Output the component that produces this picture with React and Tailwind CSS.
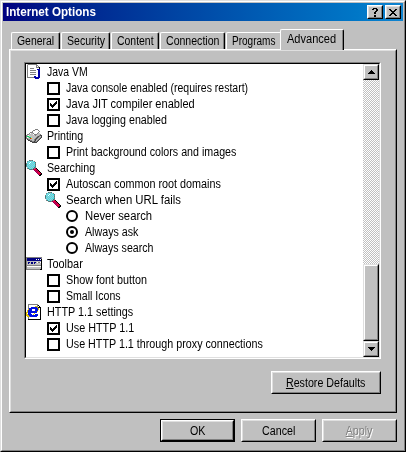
import React from "react";

const COLORS = {
  k: "#000000", w: "#ffffff", g: "#808080", l: "#c0c0c0", b: "#0000a8", c: "#40e0e8",
  t: "#408080", r: "#e00040", m: "#900060", n: "#000080", y: "#e0c000", e: "#00e060", d: "#404040", p: "#0010e0", a: "#a0c8d0",
};

function Pixels({ rows, className = "" }) {
  const w = rows[0].length;
  return (
    <svg width={w} height={rows.length} viewBox={`0 0 ${w} ${rows.length}`} shapeRendering="crispEdges" className={`block shrink-0 ${className}`}>
      {rows.flatMap((row, y) =>
        [...row].map((ch, x) => (COLORS[ch] ? <rect key={`${x}-${y}`} x={x} y={y} width="1" height="1" fill={COLORS[ch]} /> : null))
      )}
    </svg>
  );
}

const JAVA = [
  ".lggggggggg.....",
  ".gwwwwwwwwgg....",
  ".gwwwwwwwwgwg...",
  ".gwwwwwwwwgggk..",
  ".gwwggggwwwwwk..",
  ".gwwwwwwwwwbbb..",
  ".gwwggggggwwbb..",
  ".gwwwwwwwwwwbb..",
  ".gwwggggggwwbb..",
  ".gwwwwwwwwwwbb..",
  ".gwwggggggwwbb..",
  ".gwwwwwwwwwwbb..",
  ".gwwwwwwbbwwbb..",
  ".gggggggbbbbbb..",
  ".........bbbb...",
  "................",
];
const PRINTER = [
  "................",
  ".........ggg....",
  ".......ggwwwg...",
  "......gwwwwwwg..",
  "....gggwwwwwg...",
  "...gwllgwwwgll..",
  ".ggllllwggglllg.",
  "glwllllllglllgdd",
  "geellllllllgdgld",
  "gwleelllllgdglgd",
  "ggllrylllgdglgd.",
  ".dggllllgdglgd..",
  "..ddggllgdlgd...",
  "....ddggdggd....",
  "......ddddd.....",
  "................",
];
const SEARCH = [
  "...tggt.........",
  ".gcacacag.......",
  ".cacwcacct......",
  "gacwcacacg......",
  "tcacacacat......",
  "tacacacacg......",
  "gcacacacct......",
  ".acacacatg......",
  ".gtcacatgrk.....",
  "...gttgmrrrk....",
  "........mrmrk...",
  ".........mrmrk..",
  "..........mrrrk.",
  "...........mrrrk",
  "............mrkk",
  ".............kk.",
];
const TOOLBAR = [
  "................",
  "gggggggggggggggg",
  "gnnnnnnnnnnnnnng",
  "gnnnnnnnnnwnwnwk",
  "gnnnnnnnnnnnnnnk",
  "gllllllllllllllk",
  "glnnlnnlnnlwggwk",
  "glnllnnlnllllllk",
  "gllllllllllllllk",
  "gggggggggggggggk",
  "gwwwwwwwwwwwwwwk",
  "gllllllllllllllk",
  "gllllllllllllllk",
  "ggggggggggggggkk",
  "................",
  "................",
];
const HTTP = [
  "..gggggggggg....",
  "..gwwwwwwwwgk...",
  "..gwwwwwwyygwk..",
  "..gwwppppppykkk.",
  "..gpppppppppywk.",
  "..ypppwwwpppywk.",
  ".yppppwwwpppwwk.",
  ".ypppppppppywwk.",
  "yypppppppppwwwk.",
  "y.pppwwwywwwwwk.",
  "yyppppwywpppwwk.",
  "yyypppppppppwwk.",
  ".yygpppppppwwwk.",
  "..gwwwwwwwwwwwk.",
  "..gwwwwwwwwwwwk.",
  "..kkkkkkkkkkkkk.",
];
const CHECK = [
  "......k",
  ".....kk",
  "k...kkk",
  "kk.kkk.",
  "kkkkk..",
  ".kkk...",
  "..k....",
];
const ARROW_UP = ["...k...", "..kkk..", ".kkkkk.", "kkkkkkk"];
const ARROW_DOWN = [...ARROW_UP].reverse();
const HELP = [".kkkk.", "kk..kk", "....kk", "...kk.", "..kk..", "..kk..", "......", "..kk..", "..kk.."];
const CLOSE = ["kk....kk", ".kk..kk.", "..kkkk..", "...kk...", "..kkkk..", ".kk..kk.", "kk....kk"];

function Label({ children, className = "" }) {
  return <span className={`block whitespace-nowrap text-[12px] leading-[16px] ${className}`}>{children}</span>;
}

const raised = "border border-t-white border-l-white border-r-black border-b-black";
const raisedIn = "h-full w-full border border-t-[#dfdfdf] border-l-[#dfdfdf] border-r-[#808080] border-b-[#808080] flex items-center justify-center";
const bar = "border border-t-[#dfdfdf] border-l-[#dfdfdf] border-r-black border-b-black";
const barIn = "h-full w-full border border-t-white border-l-white border-r-[#808080] border-b-[#808080] flex items-center justify-center";

function Tab({ text, width, fit, covered }) {
  return (
    <div className={`h-[17px] rounded-tl-[2px] border-t border-l border-white ${width} ${covered ? "" : "rounded-tr-[2px] border-r border-r-black"}`}>
      <div className={`h-full pl-[5px] ${covered ? "" : "border-r border-[#808080]"}`}>
        <Label className={`origin-left ${fit}`}>{text}</Label>
      </div>
    </div>
  );
}

function Check({ on }) {
  return (
    <div className="ml-[1px] flex h-[13px] w-[13px] items-center justify-center border-2 border-black bg-white">
      {on ? <Pixels rows={CHECK} /> : null}
    </div>
  );
}

function Radio({ on }) {
  return (
    <div className="ml-[1px] flex h-[12px] w-[12px] items-center justify-center rounded-full border-2 border-black bg-white">
      {on ? <div className="h-1 w-1 rounded-full bg-black" /> : null}
    </div>
  );
}

const ITEMS = [
  { icon: JAVA, text: "Java VM", pad: "pl-0", fit: "scale-x-[0.87]" },
  { check: false, text: "Java console enabled (requires restart)", pad: "pl-5", fit: "scale-x-[0.875]" },
  { check: true, text: "Java JIT compiler enabled", pad: "pl-5", fit: "scale-x-[0.92]" },
  { check: false, text: "Java logging enabled", pad: "pl-5", fit: "scale-x-[0.89]" },
  { icon: PRINTER, text: "Printing", pad: "pl-0", fit: "scale-x-[0.89]" },
  { check: false, text: "Print background colors and images", pad: "pl-5", fit: "scale-x-[0.89]" },
  { icon: SEARCH, text: "Searching", pad: "pl-0", fit: "scale-x-[0.89]" },
  { check: true, text: "Autoscan common root domains", pad: "pl-5", fit: "scale-x-[0.90]" },
  { icon: SEARCH, text: "Search when URL fails", pad: "pl-[19px]", fit: "scale-x-[0.945]" },
  { radio: false, text: "Never search", pad: "pl-[39px]", fit: "scale-x-[0.94]" },
  { radio: true, text: "Always ask", pad: "pl-[39px]", fit: "scale-x-[0.89]" },
  { radio: false, text: "Always search", pad: "pl-[39px]", fit: "scale-x-[0.885]" },
  { icon: TOOLBAR, text: "Toolbar", pad: "pl-0", fit: "scale-x-[0.91]" },
  { check: false, text: "Show font button", pad: "pl-5", fit: "scale-x-[0.90]" },
  { check: false, text: "Small Icons", pad: "pl-5", fit: "scale-x-[0.88]" },
  { icon: HTTP, text: "HTTP 1.1 settings", pad: "pl-0", fit: "scale-x-[0.90]" },
  { check: true, text: "Use HTTP 1.1", pad: "pl-5", fit: "scale-x-[0.90]" },
  { check: false, text: "Use HTTP 1.1 through proxy connections", pad: "pl-5", fit: "scale-x-[0.895]" },
];

function Item({ icon, check, radio, text, pad, fit }) {
  return (
    <div className={`flex h-4 items-start ${pad}`}>
      {icon && <div className="w-[21px] shrink-0"><Pixels rows={icon} /></div>}
      {check !== undefined && <div className="w-5 shrink-0 pt-[2px]"><Check on={check} /></div>}
      {radio !== undefined && <div className="w-5 shrink-0 pt-[2px]"><Radio on={radio} /></div>}
      <Label className={`origin-left ${fit}`}>{text}</Label>
    </div>
  );
}

export default function App() {
  return (
    <div className="h-[452px] w-[406px] overflow-hidden border border-t-[#dfdfdf] border-l-[#dfdfdf] border-r-black border-b-black bg-[#c0c0c0] font-['Liberation_Sans',Arial,sans-serif] text-black">
      <div className="h-full border border-t-white border-l-white border-r-[#808080] border-b-[#808080] p-px">
        <div className="flex h-[18px] w-[400px] items-center bg-gradient-to-r from-[#000080] to-[#1084d0] pl-[3px] pr-[2px]">
          <Label className="grow origin-left scale-x-[0.97] font-bold text-white">Internet Options</Label>
          <div className={`h-[14px] w-4 bg-[#c0c0c0] ${raised}`}><div className={raisedIn}><Pixels rows={HELP} /></div></div>
          <div className={`ml-[2px] h-[14px] w-4 bg-[#c0c0c0] ${raised}`}><div className={raisedIn}><Pixels rows={CLOSE} /></div></div>
        </div>

        <div className="flex h-7 items-end pl-2">
          <Tab text="General" width="w-[49px]" fit="scale-x-[0.87]" />
          <Tab text="Security" width="ml-px w-[49px]" fit="scale-x-[0.88]" />
          <Tab text="Content" width="ml-px w-[48px]" fit="scale-x-[0.87]" />
          <Tab text="Connection" width="ml-px w-[65px]" fit="scale-x-[0.88]" />
          <Tab text="Programs" width="ml-px w-[54px]" fit="scale-x-[0.835]" covered />
          <div className="relative z-10 -mb-px h-[21px] w-[64px] rounded-t-[2px] border border-b-0 border-t-white border-l-white border-r-black bg-[#c0c0c0]">
            <div className="h-full border-r border-[#808080] pl-[6px] pt-px"><Label className="origin-left scale-x-[0.92]">Advanced</Label></div>
          </div>
        </div>

        <div className={`ml-[6px] h-[364px] w-[388px] ${raised}`}>
          <div className="h-full border border-t-[#dfdfdf] border-l-[#dfdfdf] border-r-[#808080] border-b-[#808080] pl-[13px] pt-[11px]">
            <div className="h-[297px] w-[357px] border border-t-[#808080] border-l-[#808080] border-r-white border-b-white">
              <div className="flex h-full border border-t-black border-l-black border-r-[#dfdfdf] border-b-[#dfdfdf] bg-white">
                <div className="grow">
                  {ITEMS.map((item) => <Item key={item.text} {...item} />)}
                </div>
                <div className="flex w-4 flex-col bg-[repeating-conic-gradient(#ffffff_0_25%,#c0c0c0_0_50%)] bg-[length:2px_2px]">
                  <div className={`h-4 bg-[#c0c0c0] ${bar}`}><div className={barIn}><Pixels rows={ARROW_UP} /></div></div>
                  <div className="grow" />
                  <div className={`h-[77px] bg-[#c0c0c0] ${bar}`}><div className={barIn} /></div>
                  <div className={`h-4 bg-[#c0c0c0] ${bar}`}><div className={barIn}><Pixels rows={ARROW_DOWN} /></div></div>
                </div>
              </div>
            </div>
            <div className={`ml-[247px] mt-3 h-[23px] w-[110px] ${raised}`}>
              <div className={raisedIn}><Label className="scale-x-[0.89]"><u>R</u>estore Defaults</Label></div>
            </div>
          </div>
        </div>

        <div className="ml-[157px] mt-[6px] flex gap-[6px]">
          <div className="h-[23px] w-[75px] border border-black">
            <div className={`h-full ${raised}`}><div className={raisedIn}><Label className="scale-x-[0.89]">OK</Label></div></div>
          </div>
          <div className={`h-[23px] w-[75px] ${raised}`}><div className={raisedIn}><Label className="scale-x-[0.89]">Cancel</Label></div></div>
          <div className={`h-[23px] w-[75px] ${raised}`}>
            <div className={raisedIn}><Label className="scale-x-[0.89] text-[#808080] [text-shadow:1px_1px_0_#ffffff]"><u>A</u>pply</Label></div>
          </div>
        </div>
      </div>
    </div>
  );
}
